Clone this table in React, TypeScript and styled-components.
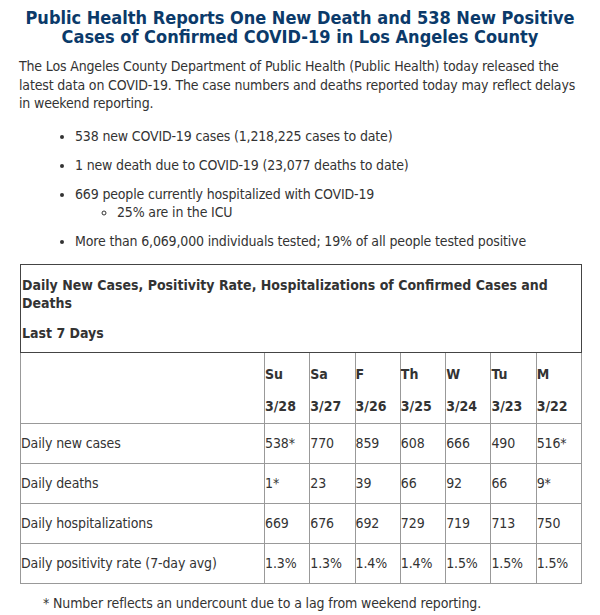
import React from "react";
import styled, { createGlobalStyle } from "styled-components";

const Global = createGlobalStyle`
  html, body { margin: 0; padding: 0; background: #fff; }
  body { font-family: "DejaVu Sans Condensed", "DejaVu Sans", sans-serif; color: #333; }
`;

const Page = styled.div`
  width: 600px;
  padding: 8px 0 0 0;
  box-sizing: border-box;
`;

const Title = styled.h1`
  margin: 0;
  text-align: center;
  font-size: 18px;
  line-height: 19px;
  font-weight: bold;
  color: #0b3a6a;
`;

const Intro = styled.p`
  margin: 11px 20px 0 19px;
  font-size: 14px;
  line-height: 18.5px;
  letter-spacing: -0.16px;
`;

const List = styled.ul`
  margin: 14px 0 0 0;
  padding: 0 0 0 75px;
  font-size: 14px;
  line-height: 18px;
  letter-spacing: -0.16px;
`;

const Item = styled.li`
  margin: 0 0 11px 0;
`;

const SubList = styled.ul`
  margin: 0;
  padding-left: 42px;
  list-style-type: circle;
`;

const Table = styled.table`
  margin: 14px 0 0 20px;
  width: 562px;
  border-collapse: collapse;
  border: 1px solid #444;
  font-size: 14px;
  line-height: 18px;
`;

const CaptionCell = styled.td`
  padding: 11px 1px 10px 1px;
  font-weight: bold;
  border: 1px solid #444;
`;

const CaptionLine = styled.div<{ $gap?: number }>`
  margin-top: ${(p) => p.$gap ?? 0}px;
`;

const HeadCell = styled.td<{ $label?: boolean }>`
  padding: 12px 1px 8px 0;
  border: 1px solid #999;
  font-weight: bold;
  vertical-align: top;
  width: ${(p) => (p.$label ? "242px" : "auto")};
`;

const HeadLine = styled.div<{ $gap?: number }>`
  margin-top: ${(p) => p.$gap ?? 0}px;
  white-space: nowrap;
`;

const Cell = styled.td`
  height: 40px;
  box-sizing: border-box;
  padding: 0 1px 0 0;
  border: 1px solid #999;
  vertical-align: middle;
  white-space: nowrap;
  letter-spacing: -0.12px;
`;

const Note = styled.p`
  margin: 10px 0 0 43px;
  font-size: 14px;
  line-height: 18px;
  letter-spacing: -0.12px;
`;

const days = [
  ["Su", "3/28"],
  ["Sa", "3/27"],
  ["F", "3/26"],
  ["Th", "3/25"],
  ["W", "3/24"],
  ["Tu", "3/23"],
  ["M", "3/22"],
];

const rows: [string, string[]][] = [
  ["Daily new cases", ["538*", "770", "859", "608", "666", "490", "516*"]],
  ["Daily deaths", ["1*", "23", "39", "66", "92", "66", "9*"]],
  ["Daily hospitalizations", ["669", "676", "692", "729", "719", "713", "750"]],
  ["Daily positivity rate (7-day avg)", ["1.3%", "1.3%", "1.4%", "1.4%", "1.5%", "1.5%", "1.5%"]],
];

export default function App() {
  return (
    <Page>
      <Global />
      <Title>
        Public Health Reports One New Death and 538 New Positive
        <br />
        Cases of Confirmed COVID-19 in Los Angeles County
      </Title>
      <Intro>
        The Los Angeles County Department of Public Health (Public Health) today released the latest data on
        COVID-19. The case numbers and deaths reported today may reflect delays in weekend reporting.
      </Intro>
      <List>
        <Item>538 new COVID-19 cases (1,218,225 cases to date)</Item>
        <Item>1 new death due to COVID-19 (23,077 deaths to date)</Item>
        <Item>
          669 people currently hospitalized with COVID-19
          <SubList>
            <li>25% are in the ICU</li>
          </SubList>
        </Item>
        <Item>More than 6,069,000 individuals tested; 19% of all people tested positive</Item>
      </List>
      <Table>
        <tbody>
          <tr>
            <CaptionCell colSpan={8}>
              <CaptionLine>Daily New Cases, Positivity Rate, Hospitalizations of Confirmed Cases and Deaths</CaptionLine>
              <CaptionLine $gap={12}>Last 7 Days</CaptionLine>
            </CaptionCell>
          </tr>
          <tr>
            <HeadCell $label />
            {days.map(([d, date]) => (
              <HeadCell key={date}>
                <HeadLine>{d}</HeadLine>
                <HeadLine $gap={14}>{date}</HeadLine>
              </HeadCell>
            ))}
          </tr>
          {rows.map(([label, vals]) => (
            <tr key={label}>
              <Cell>{label}</Cell>
              {vals.map((v, i) => (
                <Cell key={i}>{v}</Cell>
              ))}
            </tr>
          ))}
        </tbody>
      </Table>
      <Note>* Number reflects an undercount due to a lag from weekend reporting.</Note>
    </Page>
  );
}
